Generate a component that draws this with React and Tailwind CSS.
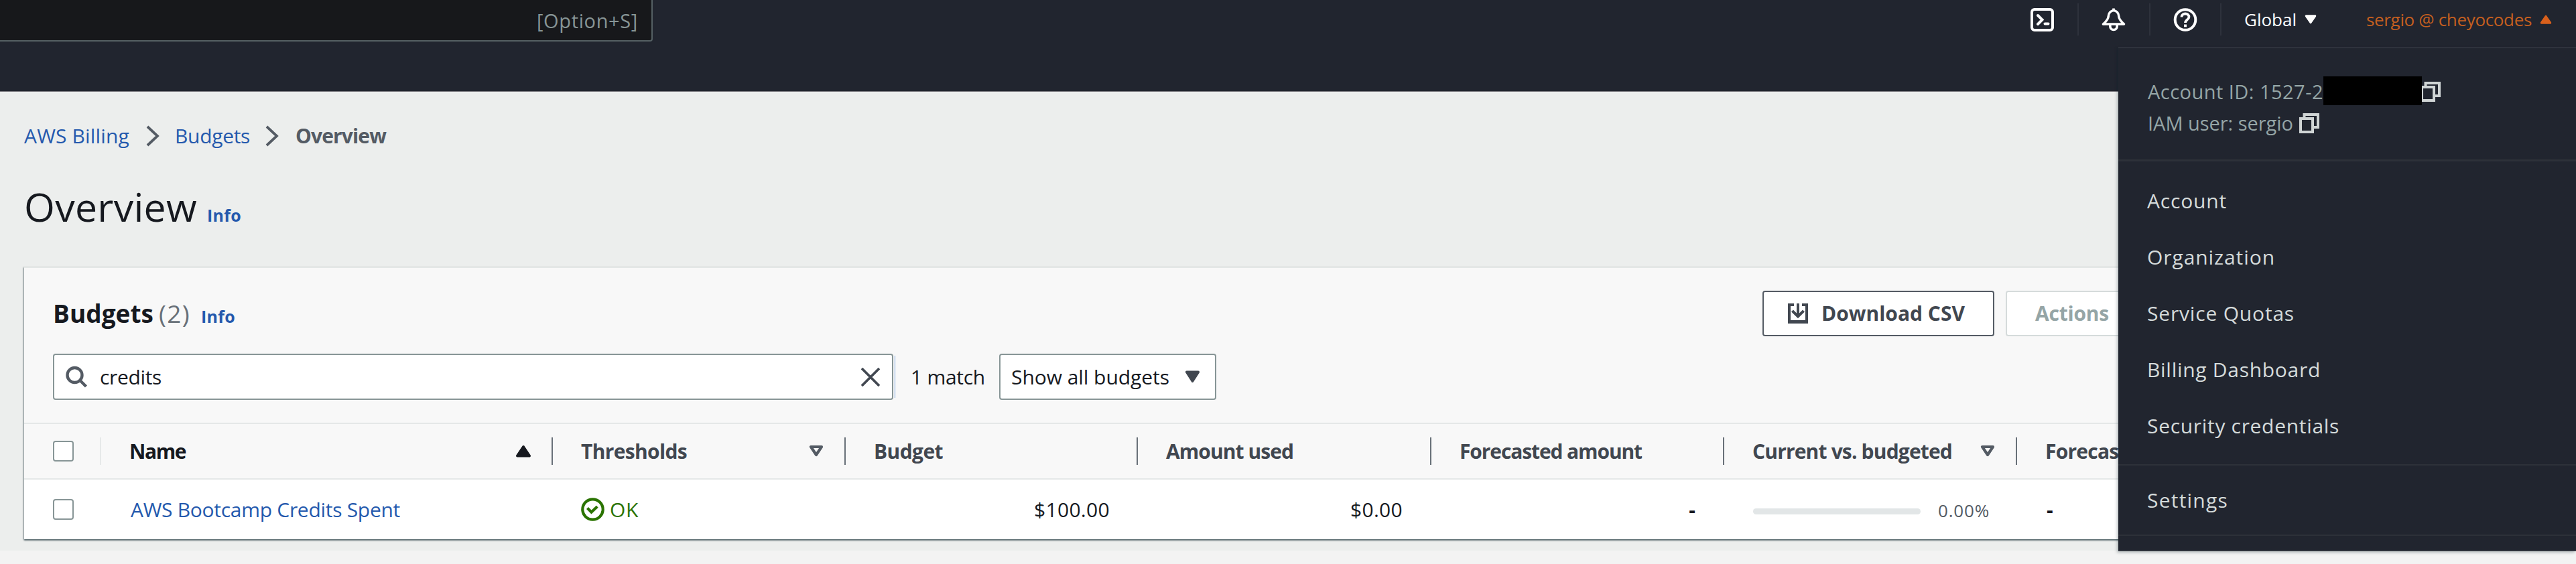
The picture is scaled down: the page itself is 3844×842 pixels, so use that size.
import { useLayoutEffect, useRef } from 'react';

/* Text whose tracking is adjusted so that it takes up exactly `w` pixels. */
function Fit({ w, className = '', children }) {
  const ref = useRef(null);
  useLayoutEffect(() => {
    const el = ref.current;
    el.style.letterSpacing = '0px';
    const natural = el.getBoundingClientRect().width;
    el.style.letterSpacing = `${(w - natural) / el.textContent.length}px`;
  }, [w]);
  return (
    <span ref={ref} className={`inline-block shrink-0 whitespace-nowrap ${className}`}>
      {children}
    </span>
  );
}

const Crumb = () => (
  <svg className="h-8 w-5 shrink-0" viewBox="0 0 20 32" fill="none" stroke="#545b64" strokeWidth="3.8">
    <path d="M2 2l15 14L2 30" />
  </svg>
);

const Caret = ({ up, className }) => (
  <svg className={`shrink-0 ${className}`} viewBox="0 0 24 19" preserveAspectRatio="none" fill="currentColor" stroke="currentColor" strokeWidth="4" strokeLinejoin="round">
    <path d={up ? 'M12 3L21 16.500H3z' : 'M12 16L3 2.500h18z'} />
  </svg>
);

const Sortable = () => (
  <svg className="h-[19px] w-6 shrink-0" viewBox="0 0 24 19" fill="none" stroke="#545b64" strokeWidth="4.200" strokeLinejoin="round">
    <path d="M12 15L4 3h16z" />
  </svg>
);

const Copy = ({ className = '' }) => (
  <svg className={`h-8 w-8 shrink-0 ${className}`} viewBox="0 0 32 32" fill="none" stroke="#d0d5d5" strokeWidth="4">
    <path d="M3 9h18v20H3z" />
    <path d="M8.500 7V3H29v19h-6" />
  </svg>
);

const Checkbox = () => <span className="block h-[31px] w-[31px] rounded-[4px] border-2 border-[#879596] bg-white" />;

const Divider = () => <span className="h-12 w-[2px] bg-[#2e323c]" />;

function HeadCell({ label, w, icon, active, last }) {
  return (
    <div className="flex items-center">
      <span className={`flex-1 pl-[42px] font-bold ${active ? 'text-[#16191f]' : 'text-[#414750]'}`}>
        <Fit w={w} className="[font-stretch:92%]">{label}</Fit>
      </span>
      {icon && <span className="mr-[30px] flex">{icon}</span>}
      {!last && <span className="h-[41px] w-[2px] bg-[#687078]" />}
    </div>
  );
}

function MenuItem({ w, children }) {
  return (
    <li className="flex h-[84px] items-center pl-[43px] text-[30px] text-[#d5dbdb]">
      <Fit w={w}>{children}</Fit>
    </li>
  );
}

const cols = 'grid grid-cols-[115px_674px_437px_436px_438px_437px_437px_1fr]';

export default function App() {
  return (
    <div className="relative h-[842px] w-[3844px] overflow-hidden bg-[#f3f3f3] font-['Open_Sans','Noto_Sans',sans-serif] text-[30px] leading-none text-[#16191f]">
      <header className="flex h-[137px] items-start justify-between border-b border-[#77767c] bg-[#21252f]">
        <div className="flex h-[62px] w-[974px] items-center justify-end rounded-br-[4px] border-r-2 border-b-2 border-[#556064] bg-[#17181b] pr-[20px] text-[29px] text-[#879596]">
          <Fit w={151}>[Option+S]</Fit>
        </div>
        <nav className="flex h-[58px] items-center pr-[36px] text-[26px] text-white">
          <svg className="h-[35px] w-[35px]" viewBox="0 0 35 35" fill="none" stroke="currentColor" strokeWidth="4">
            <rect x="2" y="2" width="31" height="31" rx="4" />
            <path d="M11 11l6.500 6.500L11 24" strokeLinecap="round" />
            <path d="M21.500 23.500h5" strokeLinecap="round" />
          </svg>
          <span className="flex w-[71px] justify-center"><Divider /></span>
          <svg className="h-[35px] w-[36px]" viewBox="0 0 36 35" fill="none" stroke="currentColor" strokeWidth="3.600" strokeLinejoin="round">
            <path d="M18 3.500C13.500 4 10.500 8 10.200 12.500C10 17 7 20 2.500 24H33.500C29 20 26 17 25.800 12.500C25.500 8 22.500 4 18 3.500z" />
            <path d="M18 0.500v3" />
            <path d="M12.800 24.500v2.500c0 3.500 2.200 5.500 5.200 5.500s5.200-2 5.200-5.500v-2.500" />
          </svg>
          <span className="flex w-[71px] justify-center"><Divider /></span>
          <svg className="h-[35px] w-[36px]" viewBox="0 0 36 35" fill="none" stroke="currentColor" strokeWidth="4">
            <circle cx="18" cy="17.500" r="15.300" />
            <path d="M12.500 13.500c0-3 2.200-5 5.500-5s5.500 2 5.500 4.800c0 4-5.500 4.200-5.500 8.700" strokeWidth="3.800" />
            <path d="M16 24.500h4v3.800h-4z" fill="currentColor" stroke="none" />
          </svg>
          <span className="flex w-[70px] justify-center"><Divider /></span>
          <Fit w={78} className="mr-[12px] font-medium">Global</Fit>
          <Caret className="h-[14px] w-[18px]" />
          <span className="ml-[38px]"><Divider /></span>
          <span className="ml-[36px] flex items-center text-[#d9601c]">
            <Fit w={247} className="mr-[12px] text-[#c55f1f] [font-weight:450]">sergio @ cheyocodes</Fit>
            <Caret up className="h-[14px] w-[18px]" />
          </span>
        </nav>
      </header>

      <main className="h-[685px] bg-[#eceeed] pl-[36px]">
        <div className="flex h-[86px] items-end">
          <div className="flex h-[41px] items-center">
            <Fit w={157} className="text-[#2459ad] font-medium">AWS Billing</Fit>
            <span className="ml-[25px] mr-[23px] flex"><Crumb /></span>
            <Fit w={112} className="text-[#2459ad] font-medium">Budgets</Fit>
            <span className="ml-[23px] mr-[25px] flex"><Crumb /></span>
            <Fit w={135} className="font-bold text-[#545b64] [font-stretch:92%]">Overview</Fit>
          </div>
        </div>
        <div className="mt-[45px] flex h-[80px] items-baseline leading-[80px]">
          <Fit w={258} className="mr-[15px] text-[59px] [font-stretch:97%] font-medium">Overview</Fit>
          <Fit w={51} className="text-[25px] font-bold text-[#2459ad]">Info</Fit>
        </div>

        <section className="mt-[50px] border-t-2 border-[#e3e7e6] bg-[#f8f8f8] shadow-[0_2px_2px_rgba(0,28,36,0.5),-1px_1px_2px_rgba(0,28,36,0.35)]">
          <div className="flex h-[102px] items-end pl-[41px]">
            <div className="flex h-[68px] flex-1 items-center">
              <div className="flex w-[2553px] items-baseline pb-px">
                <Fit w={150} className="mr-[8px] ml-[2px] text-[37px] font-bold [font-stretch:96%]">Budgets</Fit>
                <Fit w={47} className="mr-[16px] text-[37px] text-[#687078] font-medium">(2)</Fit>
                <Fit w={51} className="text-[25px] font-bold text-[#2459ad]">Info</Fit>
              </div>
              <button className="flex h-[68px] w-[346px] shrink-0 items-center rounded-[4px] border-2 border-[#545b64] bg-white pl-[35px] font-bold text-[#414750]">
                <svg className="mr-[19px] h-[32px] w-[32px]" viewBox="0 0 32 32" fill="none" stroke="currentColor" strokeWidth="4">
                  <path d="M10 3H3v26h26V3h-7" />
                  <path d="M2 28.500h28" strokeWidth="5" />
                  <path d="M16 1v20" />
                  <path d="M7.500 12l8.500 8.500 8.500-8.500" />
                </svg>
                <Fit w={214} className="[font-stretch:96%]">Download CSV</Fit>
              </button>
              <button className="ml-[17px] flex h-[68px] w-[230px] shrink-0 items-center rounded-[4px] border-2 border-[#d5dbdb] bg-white pl-[42px] font-bold text-[#95a5a6]">
                <Fit w={110} className="[font-stretch:96%]">Actions</Fit>
              </button>
            </div>
          </div>
          <div className="flex h-[129px] items-start pt-[26px] pl-[43px]">
            <div className="flex h-[69px] w-[1254px] items-center rounded-[4px] border-2 border-[#879596] bg-white pl-[17px] pr-[17px]">
              <svg className="mr-[18px] h-[33px] w-[33px]" viewBox="0 0 33 33" fill="none" stroke="#545b64" strokeWidth="4.400">
                <circle cx="13.500" cy="14" r="11" />
                <path d="M21.500 22l9 9" />
              </svg>
              <Fit w={92} className="font-medium [font-stretch:94%]">credits</Fit>
              <svg className="ml-auto h-[30px] w-[30px]" viewBox="0 0 30 30" fill="none" stroke="#414750" strokeWidth="3.800">
                <path d="M2 2l26 26M28 2L2 28" />
              </svg>
            </div>
            <span className="mt-[3px] ml-[2px] h-[63px] w-px bg-[#7ba6e0]" />
            <div className="ml-[23px] flex h-[69px] w-[132px] items-center">
              <Fit w={111} className="font-medium [font-stretch:94%]">1 match</Fit>
            </div>
            <div className="flex h-[69px] w-[324px] items-center justify-between rounded-[4px] border-2 border-[#879596] bg-white pr-[22px] pl-[16px]">
              <Fit w={236} className="font-medium [font-stretch:94%]">Show all budgets</Fit>
              <Caret className="h-[19px] w-[23px] text-[#414750]" />
            </div>
          </div>

          <div className={`${cols} h-[85px] border-t-2 border-b-2 border-[#e5e8e8]`}>
            <div className="flex items-center justify-between pl-[43px]">
              <Checkbox />
              <span className="h-[41px] w-[2px] bg-[#e6e9e9]" />
            </div>
            <HeadCell label="Name" w={84} active icon={<Caret up className="h-[19px] w-6 text-[#16191f]" />} />
            <HeadCell label="Thresholds" w={158} icon={<Sortable />} />
            <HeadCell label="Budget" w={103} />
            <HeadCell label="Amount used" w={190} />
            <HeadCell label="Forecasted amount" w={272} />
            <HeadCell label="Current vs. budgeted" w={298} icon={<Sortable />} />
            <HeadCell label="Forecasted vs. budgeted" w={345} last />
          </div>
          <div className={`${cols} h-[89px] items-center bg-white font-medium`}>
            <div className="pl-[43px]"><Checkbox /></div>
            <div className="pl-[44px] text-[#2459ad]"><Fit w={402} className="[font-stretch:96%]">AWS Bootcamp Credits Spent</Fit></div>
            <div className="flex items-center pl-[42px] text-[#2a7300]">
              <svg className="mr-[8px] h-[35px] w-[35px]" viewBox="0 0 35 35" fill="none" stroke="currentColor" strokeWidth="4.200">
                <circle cx="17.500" cy="17.500" r="15.200" />
                <path d="M9.500 15.500l6 6 8.800-8.300" />
              </svg>
              <Fit w={43}>OK</Fit>
            </div>
            <div className="pr-[42px] text-right"><Fit w={113}>$100.00</Fit></div>
            <div className="pr-[43px] text-right"><Fit w={78}>$0.00</Fit></div>
            <div className="pr-[43px] text-right font-bold">-</div>
            <div className="flex items-center pl-[43px]">
              <span className="mt-[5px] h-[9px] w-[250px] rounded-full bg-[#e2e6e7]" />
              <span className="ml-[26px] pt-[2px] text-[26px] text-[#545b64]"><Fit w={77}>0.00%</Fit></span>
            </div>
            <div className="pl-[44px] font-bold">-</div>
          </div>
        </section>
      </main>

      <aside className="absolute top-[70px] right-0 h-[753px] w-[683px] border-t-2 border-b border-t-[#2e323c] border-b-[#4b4d55] bg-[#21252f] shadow-[-2px_2px_4px_rgba(0,28,36,0.25)]">
        <div className="h-[169px] border-b-[3px] border-[#2d3139] pt-[41px] pl-[44px] text-[29px] text-[#95a5a6]">
          <div className="flex h-[47px] items-center">
            <Fit w={262}>Account ID: 1527-2</Fit>
            <span className="relative z-10 mb-[2px] h-[43px] w-[147px] bg-black" />
            <Copy className="-ml-[3px]" />
          </div>
          <div className="flex h-[47px] items-center">
            <Fit w={217} className="mr-[8px]">IAM user: sergio</Fit>
            <Copy />
          </div>
        </div>
        <ul className="h-[454px] border-b-2 border-[#2d3139] pt-[17px]">
          <MenuItem w={119}>Account</MenuItem>
          <MenuItem w={191}>Organization</MenuItem>
          <MenuItem w={220}>Service Quotas</MenuItem>
          <MenuItem w={259}>Billing Dashboard</MenuItem>
          <MenuItem w={287}>Security credentials</MenuItem>
        </ul>
        <ul className="h-[105px] border-b-2 border-[#2d3139] pt-[10px]">
          <MenuItem w={121}>Settings</MenuItem>
        </ul>
      </aside>
    </div>
  );
}
